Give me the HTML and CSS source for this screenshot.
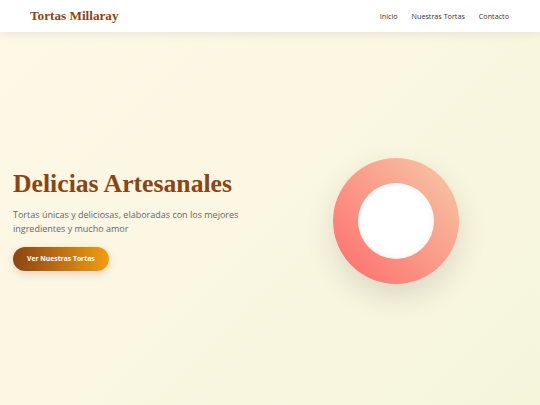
FILE: index.html
```html
<!DOCTYPE html>
<html lang="es">
<head>
<meta charset="utf-8">
<title>Tortas Millaray</title>
<link rel="stylesheet" href="styles.css">
</head>
<body>
<header class="site-header">
  <div class="logo">Tortas Millaray</div>
  <nav class="nav">
    <a href="#">Inicio</a>
    <a href="#">Nuestras Tortas</a>
    <a href="#">Contacto</a>
  </nav>
</header>
<main class="hero">
  <div class="hero-text">
    <h1>Delicias Artesanales</h1>
    <p>Tortas únicas y deliciosas, elaboradas con los mejores ingredientes y mucho amor</p>
    <a class="btn" href="#">Ver Nuestras Tortas</a>
  </div>
  <div class="hero-visual">
    <div class="ring"><div class="ring-hole"></div></div>
  </div>
</main>
</body>
</html>
```
FILE: styles.css
```css
* { box-sizing: border-box; }
html, body { margin: 0; padding: 0; }
body {
  font-family: "Open Sans", "DejaVu Sans", sans-serif;
  background: linear-gradient(135deg, #fff8e7 0%, #f5f5dc 100%);
  height: 405px;
  overflow: hidden;
  display: flex;
  flex-direction: column;
}
.site-header {
  height: 32px;
  background: #fff;
  box-shadow: 0 2px 10px rgba(0,0,0,0.08);
  display: flex;
  align-items: center;
  justify-content: space-between;
  padding: 0 31px 0 30px;
  position: relative;
  z-index: 2;
}
.logo {
  font-family: "Liberation Serif", serif;
  font-weight: 700;
  font-size: 13.2px;
  color: #8b4513;
}
.nav { display: flex; gap: 14px; }
.nav a {
  font-size: 7.2px;
  color: #333;
  text-decoration: none;
}
.hero {
  flex: 1;
  display: grid;
  grid-template-columns: 1fr 1fr;
  align-items: center;
  padding: 0 13px;
}
.hero-text { min-width: 0; }
.hero-text h1 {
  font-family: "Liberation Serif", serif;
  font-weight: 700;
  font-size: 25.7px;
  white-space: nowrap;
  color: #8b4513;
  margin: 0 0 6px;
  line-height: 36px;
}
.hero-text p {
  font-size: 9px;
  line-height: 14px;
  color: #666;
  margin: 0 0 8px;
  max-width: 240px;
}
.btn {
  display: inline-block;
  padding: 7px 14px;
  border-radius: 20px;
  background: linear-gradient(90deg, #8b4513, #f39c12);
  color: #fff;
  font-weight: 700;
  font-size: 6.8px;
  line-height: 10px;
  text-decoration: none;
  box-shadow: 0 3px 8px rgba(139,69,19,0.2);
}
.hero-visual {
  display: flex;
  justify-content: center;
  align-items: center;
}
.ring {
  width: 126px;
  height: 126px;
  border-radius: 50%;
  background: linear-gradient(45deg, #ff6b6b 0%, #f5cba7 100%);
  display: flex;
  align-items: center;
  justify-content: center;
  box-shadow: 0 12px 30px rgba(0,0,0,0.12);
  transform: translate(-3px, 2px);
}
.ring-hole {
  width: 76px;
  height: 76px;
  border-radius: 50%;
  background: #fff;
  box-shadow: inset 0 0 8px rgba(0,0,0,0.06);
}
```
